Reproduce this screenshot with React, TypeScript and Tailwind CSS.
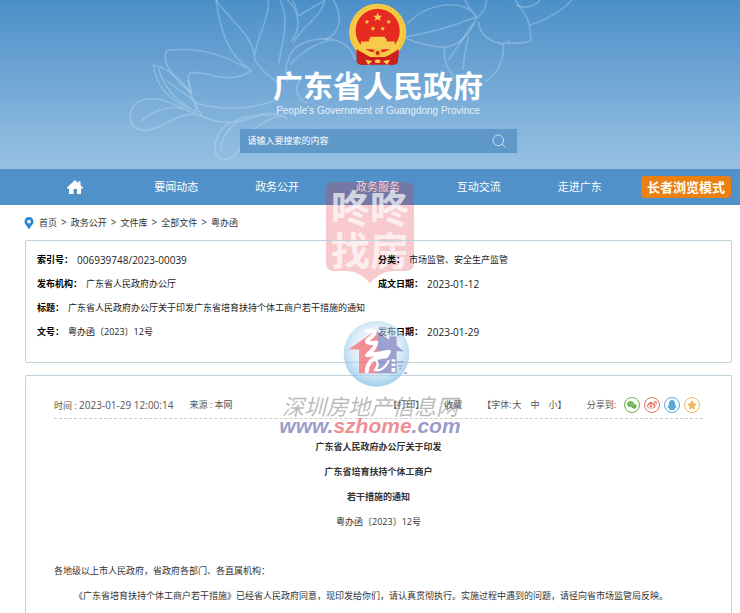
import { Search } from 'lucide-react'
import { FaMapMarkerAlt, FaQq, FaStar, FaWeibo, FaWeixin } from 'react-icons/fa'

const navItems = ['要闻动态', '政务公开', '政务服务', '互动交流', '走进广东']

const crumbs = ['首页', '政务公开', '文件库', '全部文件', '粤办函']

const details = [
    { label: '索引号：', value: '006939748/2023-00039', numeric: true },
    { label: '分类：', value: '市场监管、安全生产监管' },
    { label: '发布机构：', value: '广东省人民政府办公厅' },
    { label: '成文日期：', value: '2023-01-12', numeric: true },
    { label: '标题：', value: '广东省人民政府办公厅关于印发广东省培育扶持个体工商户若干措施的通知', wide: true },
    { label: '文号：', value: '粤办函〔2023〕12号' },
    { label: '发布日期：', value: '2023-01-29', numeric: true },
]

const shares = [
    { name: '微信', Icon: FaWeixin, className: 'border-[#62b04a] text-[#62b04a]' },
    { name: '微博', Icon: FaWeibo, className: 'border-[#e0705f] text-[#e0705f]' },
    { name: 'QQ', Icon: FaQq, className: 'border-[#56a9da] text-[#56a9da]' },
    { name: '收藏夹', Icon: FaStar, className: 'border-[#efb865] text-[#efb865]' },
]

const Flower = () => (
    <svg
        aria-hidden="true"
        viewBox="0 0 2220 510"
        preserveAspectRatio="xMidYMin slice"
        className="absolute inset-0 size-full"
        fill="none"
        stroke="#cfe6f8"
        strokeOpacity="0.3"
        strokeWidth="5"
    >
        <path d="M648 0C662 90 680 165 755 212C700 182 620 135 500 152C485 185 515 235 575 277C572 255 556 232 570 220C620 205 670 262 755 212" />
        <path d="M648 0C690 60 750 100 762 160C760 190 790 215 840 255M805 0C808 60 770 105 764 170M840 0C870 60 848 120 836 190" />
        <path d="M862 0C905 40 900 95 872 125M895 48L975 0M895 48C890 30 885 15 878 0M975 0C960 60 900 80 880 130M1000 0C1030 50 1022 100 975 120" />
        <path d="M1065 180C1050 110 950 100 890 140C862 165 852 205 862 245M870 195C900 160 940 130 1000 120" />
        <path d="M460 195C468 255 500 300 590 335C582 285 540 215 460 195ZM475 205C490 260 530 300 570 325M565 240C565 280 585 310 605 348" />
        <path d="M605 348C550 335 480 270 410 308C378 340 385 387 430 391C500 390 530 325 605 348ZM422 365C455 330 510 315 560 328" />
        <path d="M605 348C670 378 720 368 765 350C835 320 880 370 850 350C780 335 650 350 645 440C642 478 672 488 700 470C735 440 725 380 850 345M662 450C665 410 690 380 720 362" />
        <path d="M500 240C530 270 560 280 590 310C680 335 770 325 835 298M900 240C880 270 890 290 920 310" />
        <path d="M1222 70C1290 5 1390 -5 1430 50C1410 110 1370 140 1330 142C1285 140 1240 125 1210 112M1395 0C1405 25 1420 35 1430 50M1460 0C1458 30 1442 42 1430 55M1210 112C1280 100 1370 75 1430 50" />
        <path d="M1435 65C1440 105 1470 128 1510 130C1550 130 1590 130 1593 120C1588 80 1595 65 1555 15L1545 0M1335 145C1325 185 1350 215 1365 235M1510 130C1515 180 1490 225 1455 245M1498 132C1508 130 1520 130 1530 122" />
        <path d="M1420 70C1390 110 1372 145 1345 180M1405 110C1395 150 1390 180 1390 210M1590 75C1640 60 1690 30 1715 0M1550 15C1570 25 1600 25 1620 0" />
    </svg>
)

const Emblem = () => (
    <svg role="img" aria-label="国徽" viewBox="24 8 178 188" className="h-[63px] w-[60px]">
        <path d="M48 138L50 186Q60 195 75 192L150 192Q168 195 172 184L176 138Z" fill="#cf1f1c" />
        <circle cx="112" cy="95" r="85" fill="#f7cd46" />
        <circle cx="112" cy="95" r="78" fill="none" stroke="#efb939" strokeWidth="4" strokeDasharray="8 5" />
        <circle cx="112" cy="91" r="66" fill="#e52a20" />
        <path d="M49 146Q82 165 90 169L134 169Q145 165 175 146L172 187Q153 194 145 190L79 190Q61 195 51 186Z" fill="#cf1f1c" />
        <path d="M112 36L115.500 46H126L118 52L121 62L112 56L103 62L106 52L98 46H108.500Z" fill="#f8d34f" />
        <g fill="#f8c94a">
            <path d="M80 57l2 5h5l-4 4 1 5-4-3-4 3 1-5-4-4h5Z" />
            <path d="M145 57l2 5h5l-4 4 1 5-4-3-4 3 1-5-4-4h5Z" />
            <path d="M98 77l2 5h5l-4 4 1 5-4-3-4 3 1-5-4-4h5Z" />
            <path d="M127 77l2 5h5l-4 4 1 5-4-3-4 3 1-5-4-4h5Z" />
            <path d="M90 109H134V115H139V123H163V132H171L158 146H66L54 132H62V123H86V115H90Z" />
        </g>
        <path d="M73 141Q100 139 112 149Q124 139 151 141M77 158Q100 169 112 159Q124 169 147 158" fill="none" stroke="#f8c94a" strokeWidth="6" />
        <circle cx="112" cy="157" r="13" fill="#f3bd3b" />
        <circle cx="112" cy="157" r="6" fill="#cf1f1c" />
        <path d="M75 177L96 181L84 192ZM149 177L128 181L140 192ZM103 180Q112 173 121 180L118 187H106Z" fill="#f8d34f" />
    </svg>
)

const HomeIcon = () => (
    <svg aria-hidden="true" viewBox="0 0 16 16" className="size-4" fill="currentColor">
        <path d="M8 1L11.500 4.200V2.200H13.500V6L16 8.500V9.500H14V15H10V10H6.500V15H2V9.500H0V8.500Z" />
    </svg>
)

const Stamp = () => (
    <svg viewBox="0 0 88 102" className="pointer-events-none absolute left-1/2 top-[182px] h-[102px] w-[88px] -translate-x-[44px]">
        <path
            d="M8 0H80Q88 0 88 8V81Q88 89 80 89H67Q55 89 44 101Q33 89 21 89H8Q0 89 0 81V8Q0 0 8 0Z"
            fill="#e4343e"
            fillOpacity="0.26"
        />
        <g fill="#fff" fillOpacity="0.7" fontSize="39" fontWeight="700" fontFamily="'Noto Sans CJK SC', sans-serif">
            <text x="5" y="41">咚咚</text>
            <text x="5" y="83">找房</text>
        </g>
    </svg>
)

const HouseMark = () => (
    <div className="pointer-events-none absolute left-1/2 top-[321px] z-20 flex w-[184px] -translate-x-[92px] flex-col items-center">
        <svg aria-hidden="true" viewBox="12 12 200 200" className="ml-3 size-[67px] opacity-70">
            <defs>
                <radialGradient id="ball" cx="50%" cy="42%" r="60%">
                    <stop offset="0" stopColor="#ffffff" stopOpacity="0.8" />
                    <stop offset="0.6" stopColor="#c5e2f4" stopOpacity="0.85" />
                    <stop offset="1" stopColor="#74b8e4" />
                </radialGradient>
            </defs>
            <circle cx="112" cy="110" r="98" fill="url(#ball)" />
            <path d="M104 44L28 97H60V168H116V44Z" fill="#ee5f68" />
            <path d="M116 44L150 68V58H172V85L194 102H172V168H112Z" fill="#7477bb" />
            <path d="M157 126H168V134H157ZM157 139H168V147H157ZM157 152H168V164H157Z" fill="#fff" />
            <path d="M174 134H194M176 146H190M180 156L186 152M194 168H204" stroke="#7477bb" strokeWidth="4" fill="none" />
            <path
                d="M83 42Q109 36 106 50Q100 59 84 70Q81 81 111 76Q111 90 84 114Q108 112 149 104L141 117Q105 120 94 133Q84 145 83 162"
                fill="none"
                stroke="#fff"
                strokeWidth="12"
                strokeLinecap="round"
                strokeLinejoin="round"
            />
            <path d="M105 122Q124 139 108 158Q130 164 148 132" fill="none" stroke="#fff" strokeWidth="7" strokeLinecap="round" />
        </svg>
        <span className="mt-[6px] whitespace-nowrap text-[22px] italic leading-6 text-[#777]/50">深圳房地产信息网</span>
        <span className="whitespace-nowrap font-['Liberation_Sans',sans-serif] text-[21px] font-bold italic leading-4 text-[#5658a8]/60">
            www.<span className="text-[#e64c55]/65">szhome</span>.com
        </span>
    </div>
)

const App = () => {
    return (
        <div
            lang="zh-CN"
            className="relative flex min-h-screen flex-col bg-white font-['Open_Sans','Noto_Sans_CJK_SC',sans-serif] text-[9px] text-[#222]"
        >
            <header>
                <div className="relative flex flex-col items-center overflow-hidden bg-linear-to-b from-[#4b8fc8] to-[#98c1e3] pb-4 pl-4 pt-[3px] text-white">
                    <Flower />
                    <div className="relative flex flex-col items-center">
                        <Emblem />
                        <h1 className="mt-0.5 text-[30px] font-bold leading-[36px]">广东省人民政府</h1>
                        <p className="font-['Liberation_Sans',sans-serif] text-[10px] leading-[14px] text-white/80">
                            People's Government of Guangdong Province
                        </p>
                    </div>
                    <form className="relative mt-[11px] flex h-6 w-[277px] items-center bg-[#5f99ca] pl-2 pr-2.5">
                        <input
                            type="search"
                            aria-label="搜索"
                            placeholder="请输入要搜索的内容"
                            className="min-w-0 flex-1 bg-transparent outline-none placeholder:text-white"
                        />
                        <button type="button" aria-label="提交搜索">
                            <Search className="size-4 text-[#c9e2f5]" strokeWidth={1.5} />
                        </button>
                    </form>
                </div>
                <nav className="grid h-9 grid-cols-7 items-center bg-[#4f91c8] pl-[25px] pr-[9px] text-[11px] text-white">
                    <a href="#" aria-label="首页" className="flex justify-center">
                        <HomeIcon />
                    </a>
                    {navItems.map((item) => (
                        <a key={item} href="#" className="text-center">
                            {item}
                        </a>
                    ))}
                    <button
                        type="button"
                        className="h-[22px] w-[90px] justify-self-end whitespace-nowrap rounded-sm bg-[#ea8011] text-[13px] font-bold leading-none"
                    >
                        长者浏览模式
                    </button>
                </nav>
            </header>

            <Stamp />

            <main className="relative flex flex-1 flex-col pl-[25px] pr-[8px]">
                <div className="flex h-[35px] items-center text-[#333]">
                    <FaMapMarkerAlt className="-ml-0.5 mr-1 size-3 text-[#2f84cc]" />
                    {crumbs.map((crumb, i) => (
                        <span key={crumb}>
                            {i > 0 && <span className="mx-1 text-[10px]">&gt;</span>}
                            <a href="#">{crumb}</a>
                        </span>
                    ))}
                </div>

                <dl className="grid h-[123px] grid-cols-[341px_1fr] content-start rounded-xs border border-[#bfd3de] px-[11px] pt-[7px] leading-6">
                    {details.map(({ label, value, numeric, wide }) => (
                        <div key={label} className={wide ? 'col-span-2 flex gap-1' : 'flex gap-1'}>
                            <dt className="font-bold text-black">{label}</dt>
                            <dd className={numeric ? 'text-[10px]' : ''}>{value}</dd>
                        </div>
                    ))}
                </dl>

                <article className="mt-3 flex-1 rounded-t-xs border border-b-0 border-[#bfd3de] px-7 pt-[17px] text-[#333]">
                    <div className="flex h-[26px] items-start border-b border-dashed border-[#ccc] pr-[3px] leading-6 text-[#555]">
                        <span>
                            时间 : <time className="text-[10px]">2023-01-29 12:00:14</time>
                        </span>
                        <span className="ml-4">来源 : 本网</span>
                        <div className="ml-auto flex gap-5">
                            <button type="button" className="leading-6">【打印】</button>
                            <button type="button" className="leading-6">收藏</button>
                            <div className="flex">
                                <span className="mr-px">【字体:</span>
                                <span className="flex gap-[9px]">
                                    <button type="button" className="leading-6">大</button>
                                    <button type="button" className="leading-6">中</button>
                                    <button type="button" className="leading-6">小</button>
                                </span>
                                <span>】</span>
                            </div>
                            <div className="flex items-center gap-1">
                                <span className="mr-1">分享到:</span>
                                {shares.map(({ name, Icon, className }) => (
                                    <a
                                        key={name}
                                        href="#"
                                        aria-label={name}
                                        className={`flex size-4 items-center justify-center rounded-full border ${className}`}
                                    >
                                        <Icon className="size-[10px]" />
                                    </a>
                                ))}
                            </div>
                        </div>
                    </div>

                    <div className="mt-[15px] leading-[25px]">
                        <h2 className="text-center font-bold">
                            广东省人民政府办公厅关于印发
                            <br />
                            广东省培育扶持个体工商户
                            <br />
                            若干措施的通知
                        </h2>
                        <p className="text-center">粤办函〔2023〕12号</p>
                        <p className="mt-6">各地级以上市人民政府，省政府各部门、各直属机构：</p>
                        <p className="indent-5">
                            《广东省培育扶持个体工商户若干措施》已经省人民政府同意，现印发给你们，请认真贯彻执行。实施过程中遇到的问题，请径向省市场监管局反映。
                        </p>
                    </div>
                </article>
            </main>

            <HouseMark />
        </div>
    )
}

export default App
